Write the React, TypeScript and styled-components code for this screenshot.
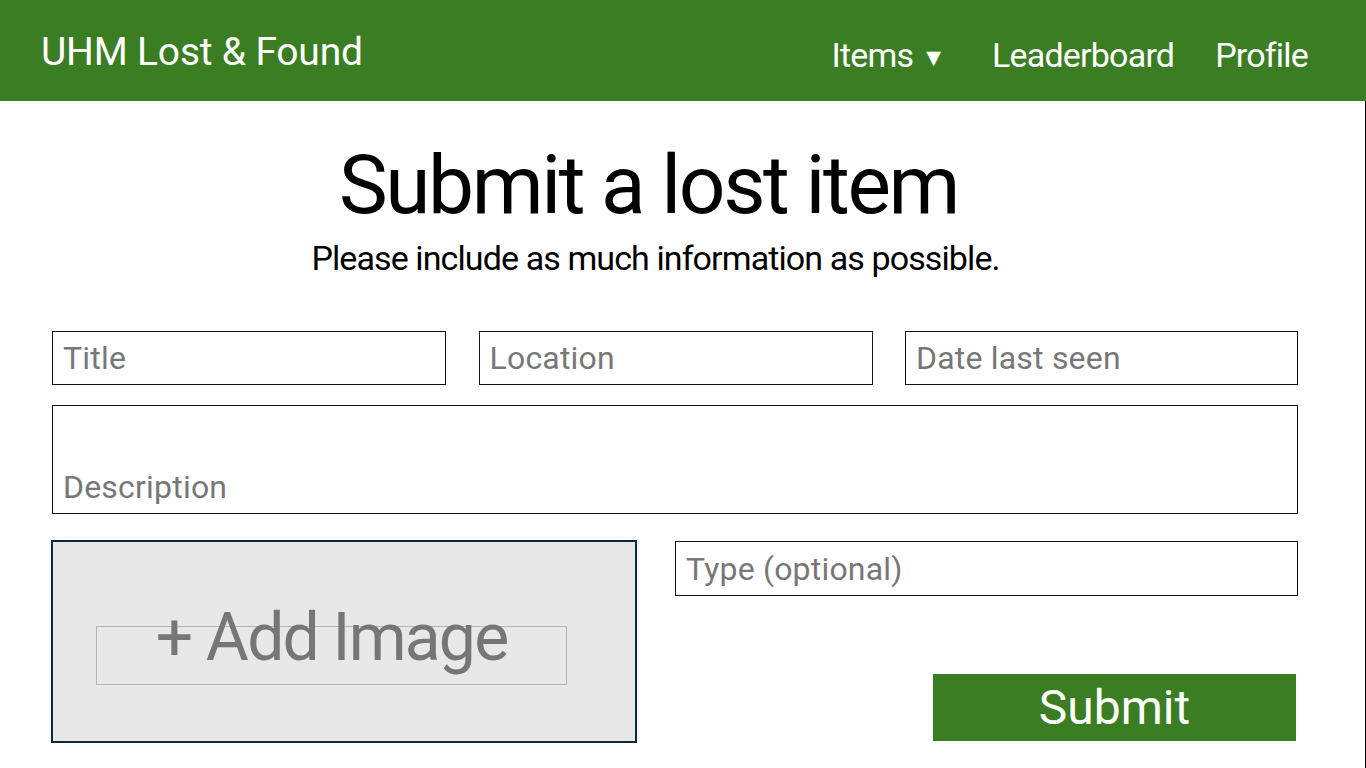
import React from "react";
import styled, { createGlobalStyle } from "styled-components";

const GlobalStyle = createGlobalStyle`
  html, body {
    margin: 0;
    padding: 0;
    background: #ffffff;
  }
  body {
    font-family: Roboto, "Liberation Sans", sans-serif;
    width: 1366px;
    height: 768px;
    overflow: hidden;
  }
  * {
    box-sizing: border-box;
  }
`;

const Page = styled.div`
  width: 1366px;
  height: 768px;
  display: flex;
  flex-direction: column;
`;

const Header = styled.header`
  height: 101px;
  flex: none;
  background: #3b7d23;
  color: #ffffff;
  display: flex;
  align-items: center;
  justify-content: space-between;
  padding: 0 58px 0 41px;
`;

const Brand = styled.div`
  font-size: 39px;
  line-height: 1;
  letter-spacing: -0.2px;
  margin-top: 4px;
`;

const Nav = styled.nav`
  display: flex;
  align-items: center;
  gap: 41px;
  margin-top: 8px;
`;

const NavLink = styled.a<{ $extra?: number }>`
  color: #ffffff;
  text-decoration: none;
  font-size: 34px;
  line-height: 1;
  letter-spacing: -0.8px;
  display: flex;
  align-items: center;
  margin-right: ${(p) => p.$extra ?? 0}px;
`;

const Caret = styled.span`
  font-size: 25px;
  margin-top: 5px;
  margin-left: 8px;
  letter-spacing: 0;
`;

const Main = styled.main`
  flex: 1;
  border-right: 1px solid #000000;
  padding-top: 43px;
  display: flex;
  flex-direction: column;
`;

const Intro = styled.section`
  text-align: center;
  padding-right: 68px;
  color: #000000;
`;

const Title = styled.h1`
  margin: 0;
  font-size: 82px;
  font-weight: 400;
  line-height: 1;
  letter-spacing: -2.4px;
`;

const Subtitle = styled.p`
  margin: 15px 0 0;
  padding-left: 14px;
  font-size: 34px;
  line-height: 1;
  letter-spacing: -0.9px;
`;

const Form = styled.form`
  margin: 56px 0 0 52px;
  width: 1246px;
  display: flex;
  flex-direction: column;
`;

const TopRow = styled.div`
  display: grid;
  grid-template-columns: 394px 394px 393px;
  justify-content: space-between;
`;

const fieldText = `
  font-family: Roboto, "Liberation Sans", sans-serif;
  font-size: 32px;
  color: #222222;
  border: 1px solid #111111;
  background: #ffffff;
  outline: none;
  letter-spacing: 0.2px;
  &::placeholder {
    color: #777777;
    opacity: 1;
  }
`;

const TextInput = styled.input<{ $h: number }>`
  ${fieldText}
  height: ${(p) => p.$h}px;
  width: 100%;
  padding: 0 10px;
  margin: 0;
`;

const DescriptionArea = styled.textarea`
  ${fieldText}
  margin-top: 20px;
  height: 109px;
  width: 100%;
  resize: none;
  padding: 65px 10px 0;
  line-height: 32px;
  overflow: hidden;
`;

const BottomRow = styled.div`
  margin-top: 26px;
  display: grid;
  grid-template-columns: 586px 1fr;
  column-gap: 38px;
  margin-left: -1px;
`;

const ImageDrop = styled.div`
  height: 203px;
  background: #e8e8e8;
  border: 2px solid #0e2b3b;
  padding: 84px 0 0 43px;
`;

const ImageLabelBox = styled.div`
  width: 471px;
  height: 59px;
  border: 1px solid #b4b4b4;
  text-align: center;
  font-size: 66px;
  line-height: 22px;
  color: #767676;
  letter-spacing: -1.8px;
  white-space: nowrap;
`;

const SideColumn = styled.div`
  display: flex;
  flex-direction: column;
  padding-top: 1px;
`;

const SubmitButton = styled.button`
  align-self: flex-end;
  margin: 78px 2px 0 0;
  width: 363px;
  height: 67px;
  background: #3b7d23;
  color: #ffffff;
  border: none;
  font-family: Roboto, "Liberation Sans", sans-serif;
  font-size: 48px;
  line-height: 1;
  letter-spacing: 0px;
  padding: 0;
  cursor: pointer;
`;

export default function App() {
  return (
    <Page>
      <GlobalStyle />
      <Header>
        <Brand>UHM Lost &amp; Found</Brand>
        <Nav>
          <NavLink href="#" $extra={5}>
            Items<Caret>▼</Caret>
          </NavLink>
          <NavLink href="#">Leaderboard</NavLink>
          <NavLink href="#">Profile</NavLink>
        </Nav>
      </Header>
      <Main>
        <Intro>
          <Title>Submit a lost item</Title>
          <Subtitle>Please include as much information as possible.</Subtitle>
        </Intro>
        <Form onSubmit={(e) => e.preventDefault()}>
          <TopRow>
            <TextInput $h={54} placeholder="Title" />
            <TextInput $h={54} placeholder="Location" />
            <TextInput $h={54} placeholder="Date last seen" />
          </TopRow>
          <DescriptionArea placeholder="Description" />
          <BottomRow>
            <ImageDrop>
              <ImageLabelBox>+ Add Image</ImageLabelBox>
            </ImageDrop>
            <SideColumn>
              <TextInput $h={55} placeholder="Type (optional)" />
              <SubmitButton type="submit">Submit</SubmitButton>
            </SideColumn>
          </BottomRow>
        </Form>
      </Main>
    </Page>
  );
}
